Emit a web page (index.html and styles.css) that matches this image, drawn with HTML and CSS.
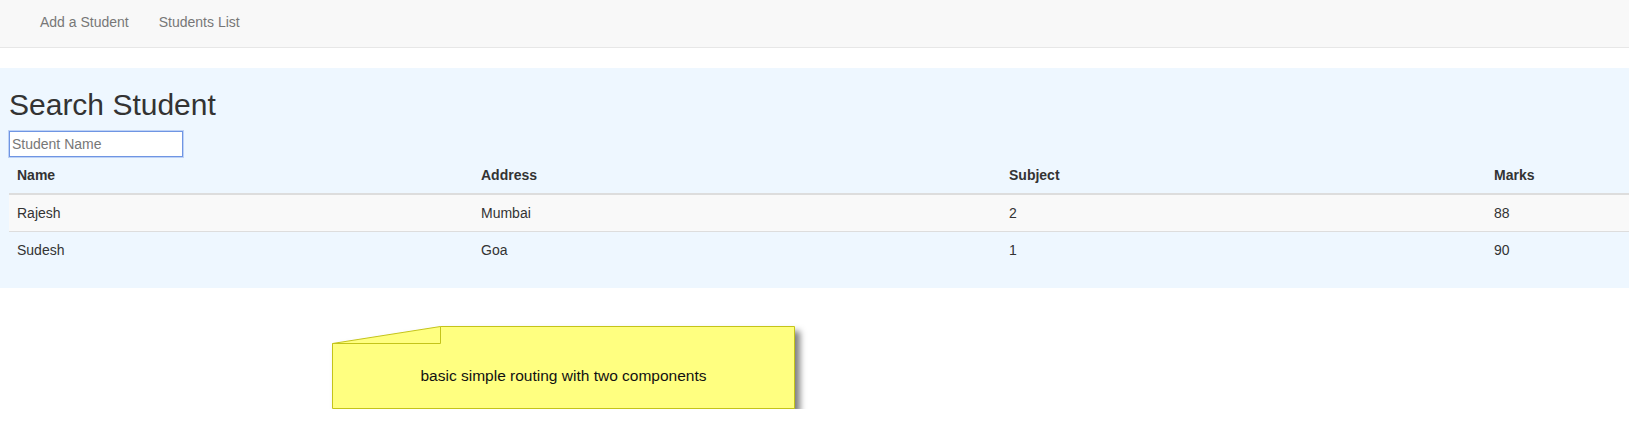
FILE: index.html
```html
<!DOCTYPE html>
<html>
<head>
<meta charset="utf-8">
<title>Students</title>
<link rel="stylesheet" href="styles.css">
</head>
<body>
<nav class="navbar">
  <a class="nav-link" href="#">Add a Student</a>
  <a class="nav-link" href="#">Students List</a>
</nav>
<section class="jumbotron">
  <h2 class="title">Search Student</h2>
  <input class="search" type="text" placeholder="Student Name">
  <table class="table">
    <colgroup>
      <col class="c-name"><col class="c-addr"><col class="c-subj"><col class="c-marks">
    </colgroup>
    <thead>
      <tr><th>Name</th><th>Address</th><th>Subject</th><th>Marks</th></tr>
    </thead>
    <tbody>
      <tr class="striped"><td>Rajesh</td><td>Mumbai</td><td>2</td><td>88</td></tr>
      <tr><td>Sudesh</td><td>Goa</td><td>1</td><td>90</td></tr>
    </tbody>
  </table>
</section>
<div class="note">
  <svg class="note-shape" width="463" height="83" viewBox="0 0 463 83">
    <polygon points="0.5,17.5 108.5,0.5 462.5,0.5 462.5,82.5 0.5,82.5" fill="#ffff80" stroke="#c4c41a" stroke-width="1"/>
    <polyline points="108.5,0.5 108.5,17.5 0.5,17.5" fill="none" stroke="#c4c41a" stroke-width="1"/>
  </svg>
  <span class="note-text">basic simple routing with two components</span>
</div>
</body>
</html>
```

FILE: styles.css
```css
html, body {
  margin: 0;
  padding: 0;
  background: #fff;
}
body {
  font-family: "Liberation Sans", Arial, sans-serif;
  font-size: 14px;
  line-height: 20px;
  color: #333;
}
.navbar {
  display: flex;
  box-sizing: border-box;
  height: 48px;
  background: #f8f8f8;
  border-bottom: 1px solid #e7e7e7;
  padding-left: 25px;
  margin-bottom: 20px;
}
.nav-link {
  display: block;
  padding: 12px 15px 15px;
  line-height: 20px;
  color: #777;
  text-decoration: none;
}
.jumbotron {
  background: #eef7ff;
  padding: 20px 0 20px 9px;
}
.title {
  margin: 0 0 10px;
  font-size: 30px;
  line-height: 33px;
  font-weight: normal;
  color: #333;
}
.search {
  display: block;
  box-sizing: border-box;
  width: 174px;
  height: 26px;
  margin: 0;
  padding: 0 2px;
  border: 1px solid #6f95e3;
  box-shadow: 0 0 0 1px rgba(130, 165, 235, 0.45);
  outline: none;
  font-family: "Liberation Sans", Arial, sans-serif;
  font-size: 14px;
  color: #333;
  background: #fff;
}
.search::placeholder {
  color: #777;
}
.table {
  width: 1620px;
  border-collapse: collapse;
  border-spacing: 0;
  table-layout: fixed;
  margin: 0;
}
.c-name { width: 464px; }
.c-addr { width: 528px; }
.c-subj { width: 485px; }
.c-marks { width: 143px; }
.table th,
.table td {
  padding: 8px;
  line-height: 20px;
  text-align: left;
  vertical-align: top;
}
.table th {
  font-weight: bold;
  border-bottom: 2px solid #ddd;
}
.table td {
  border-top: 1px solid #ddd;
}
.table tr.striped td {
  background: #f9f9f9;
}
.note {
  position: relative;
  width: 463px;
  height: 83px;
  margin: 38px 0 0 332px;
  display: flex;
  align-items: center;
  justify-content: center;
  box-sizing: border-box;
  padding-top: 17px;
}
.note-shape {
  position: absolute;
  left: 0;
  top: 0;
  overflow: visible;
  filter: drop-shadow(5px 5px 3px rgba(0, 0, 0, 0.5));
}
.note-text {
  position: relative;
  font-size: 15.5px;
  color: #111;
  line-height: 20px;
}
```
